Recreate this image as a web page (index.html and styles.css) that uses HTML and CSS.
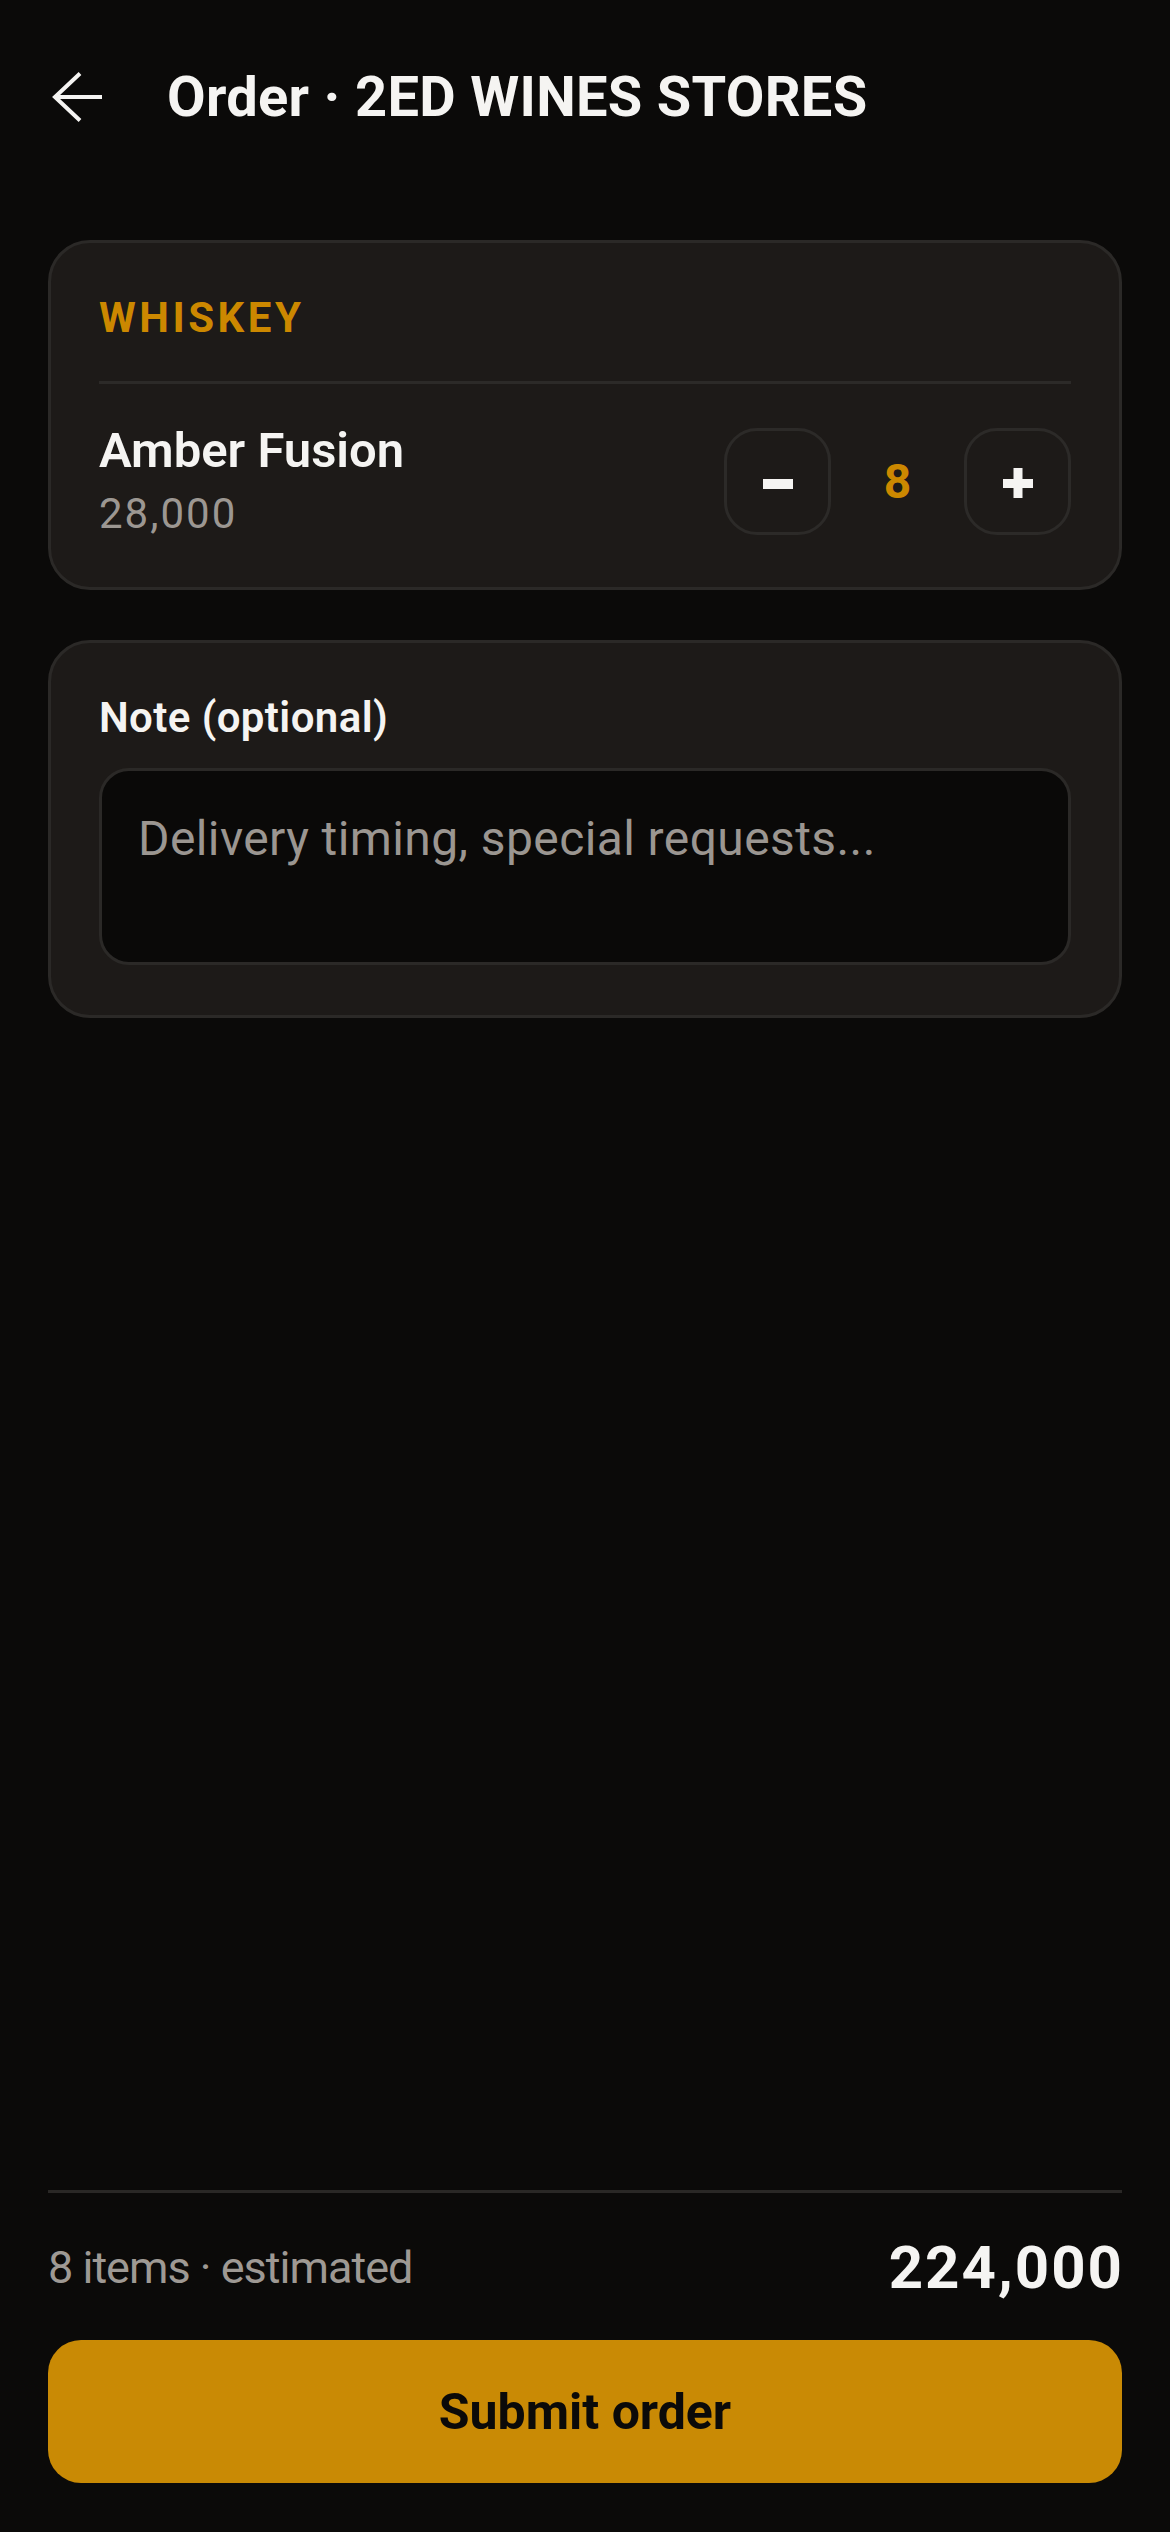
FILE: index.html
```html
<!DOCTYPE html>
<html lang="en">
<head>
<meta charset="utf-8">
<title>Order · 2ED WINES STORES</title>
<link rel="stylesheet" href="styles.css">
</head>
<body>
<div class="page">
  <header class="topbar">
    <svg class="back" width="52" height="52" viewBox="0 0 52 52" aria-hidden="true">
      <path d="M50 25H3M28 1.5L3 25L28 48.5" fill="none" stroke="#f5f4f2" stroke-width="4" stroke-linejoin="miter"/>
    </svg>
    <h1 class="title">Order · 2ED WINES STORES</h1>
  </header>

  <main class="content">
    <section class="card">
      <div class="category">WHISKEY</div>
      <div class="divider"></div>
      <div class="item-row">
        <div class="item-info">
          <div class="item-name">Amber Fusion</div>
          <div class="item-price">28,000</div>
        </div>
        <div class="qty">
          <button class="qty-btn" aria-label="Decrease">
            <svg width="30" height="30" viewBox="0 0 30 30"><rect x="0" y="11" width="30" height="10" fill="#f5f4f2"/></svg>
          </button>
          <div class="qty-value">8</div>
          <button class="qty-btn" aria-label="Increase">
            <svg width="30" height="30" viewBox="0 0 30 30"><rect x="0" y="11" width="30" height="9" fill="#f5f4f2"/><rect x="10.5" y="0" width="9" height="30" fill="#f5f4f2"/></svg>
          </button>
        </div>
      </div>
    </section>

    <section class="card note-card">
      <div class="note-label">Note (optional)</div>
      <div class="note-field"><span class="placeholder">Delivery timing, special requests...</span></div>
    </section>
  </main>

  <footer class="footer">
    <div class="summary">
      <span class="summary-label">8 items · estimated</span>
      <span class="summary-total">224,000</span>
    </div>
    <button class="submit">Submit order</button>
  </footer>
</div>
</body>
</html>
```

FILE: styles.css
```css
* { box-sizing: border-box; }

html, body {
  margin: 0;
  padding: 0;
  background: #0b0a09;
}

body {
  font-family: Roboto, "Noto Sans", "Liberation Sans", sans-serif;
  color: #f5f4f2;
}

.page {
  min-height: 2532px;
  display: flex;
  flex-direction: column;
}

.topbar {
  height: 196px;
  display: flex;
  align-items: center;
  gap: 63px;
  padding-left: 52px;
}

.back { display: block; flex: none; }

.title {
  margin: 0;
  font-size: 56px;
  font-weight: 700;
  line-height: 1.2;
  letter-spacing: 0.3px;
  color: #f5f4f2;
}

.content {
  flex: 1;
  padding: 44px 48px 0;
  display: flex;
  flex-direction: column;
  gap: 50px;
}

.card {
  background: #1d1a18;
  border: 3px solid #2b2927;
  border-radius: 42px;
  padding: 48px 48px 45px;
}

.category {
  font-size: 42px;
  line-height: 54px;
  font-weight: 700;
  letter-spacing: 3.5px;
  color: #cc8800;
}

.divider {
  height: 3px;
  background: #2c2a28;
  margin-top: 36px;
}

.item-row {
  margin-top: 36px;
  display: flex;
  align-items: center;
  justify-content: space-between;
}

.item-name {
  font-size: 49px;
  line-height: 62px;
  font-weight: 600;
  color: #f5f4f2;
}

.item-price {
  margin-top: 4px;
  font-size: 42px;
  line-height: 56px;
  letter-spacing: 2px;
  color: #9c9792;
}

.qty {
  display: flex;
  align-items: center;
}

.qty-btn {
  width: 107px;
  height: 107px;
  border: 3px solid #2c2a28;
  border-radius: 33px;
  background: transparent;
  padding: 0;
  display: flex;
  align-items: center;
  justify-content: center;
}

.qty-btn svg { display: block; margin-top: 4px; }

.qty-value {
  width: 133px;
  text-align: center;
  font-size: 48px;
  font-weight: 700;
  color: #cc8800;
}

.note-card { padding-bottom: 50px; }

.note-label {
  font-size: 42px;
  line-height: 54px;
  font-weight: 600;
  letter-spacing: 0.4px;
  color: #f5f4f2;
}

.note-field {
  margin-top: 23px;
  height: 197px;
  background: #0a0908;
  border: 3px solid #2b2927;
  border-radius: 30px;
  padding: 36px;
  font-size: 48px;
  line-height: 64px;
  letter-spacing: 0.4px;
}

.placeholder { color: #9b9691; }

.footer {
  padding: 0 48px 49px;
}

.summary {
  border-top: 3px solid #2a2826;
  padding-top: 36px;
  height: 150px;
  display: flex;
  align-items: flex-start;
  justify-content: space-between;
}

.summary-label {
  font-size: 45px;
  line-height: 78px;
  letter-spacing: -1px;
  color: #9e9994;
}

.summary-total {
  font-size: 60px;
  line-height: 78px;
  font-weight: 700;
  letter-spacing: 2px;
  margin-right: -2px;
  color: #f5f4f2;
}

.submit {
  display: block;
  width: 100%;
  height: 143px;
  border: none;
  border-radius: 33px;
  background: #c98a05;
  color: #0b0a09;
  font-family: inherit;
  font-size: 50px;
  font-weight: 700;
}
```
